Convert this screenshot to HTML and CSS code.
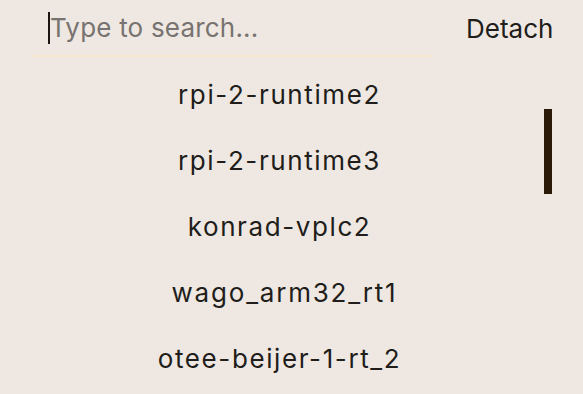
FILE: index.html
```html
<!DOCTYPE html>
<html>
<head>
<meta charset="utf-8">
<link rel="stylesheet" href="styles.css">
</head>
<body>
<div class="panel">
  <div class="header">
    <div class="search">
      <span class="caret"></span><span class="placeholder">Type to search...</span>
    </div>
    <div class="detach">Detach</div>
  </div>
  <div class="list">
    <div class="item">rpi-2-runtime2</div>
    <div class="item">rpi-2-runtime3</div>
    <div class="item">konrad-vplc2</div>
    <div class="item item-indent">wago_arm32_rt1</div>
    <div class="item">otee-beijer-1-rt_2</div>
  </div>
  <div class="thumb"></div>
</div>
</body>
</html>
```
FILE: styles.css
```css
html, body {
  margin: 0;
  padding: 0;
  background: #efe8e2;
}
.panel {
  position: relative;
  width: 583px;
  height: 394px;
  overflow: hidden;
  font-family: Inter, "Noto Sans", sans-serif;
  font-size: 26px;
  color: #211d1a;
}
.header {
  display: flex;
  align-items: flex-start;
  padding-left: 31px;
}
.search {
  width: 401px;
  height: 57px;
  border-bottom: 2px solid #f8e5cf;
  display: flex;
  align-items: center;
  padding-left: 17px;
  box-sizing: border-box;
}
.caret {
  width: 2px;
  height: 32px;
  background: #1c1410;
}
.placeholder {
  color: #777371;
  letter-spacing: 0.2px;
}
.detach {
  margin-left: 34px;
  height: 57px;
  display: flex;
  align-items: center;
}
.list {
  width: 559px;
  padding-top: 4px;
}
.item {
  height: 66px;
  display: flex;
  align-items: center;
  justify-content: center;
  letter-spacing: 1.6px;
}
.item-indent {
  padding-left: 10px;
  letter-spacing: 1.8px;
}
.thumb {
  position: absolute;
  left: 544px;
  top: 109px;
  width: 8px;
  height: 85px;
  background: #2b1a07;
}
```
